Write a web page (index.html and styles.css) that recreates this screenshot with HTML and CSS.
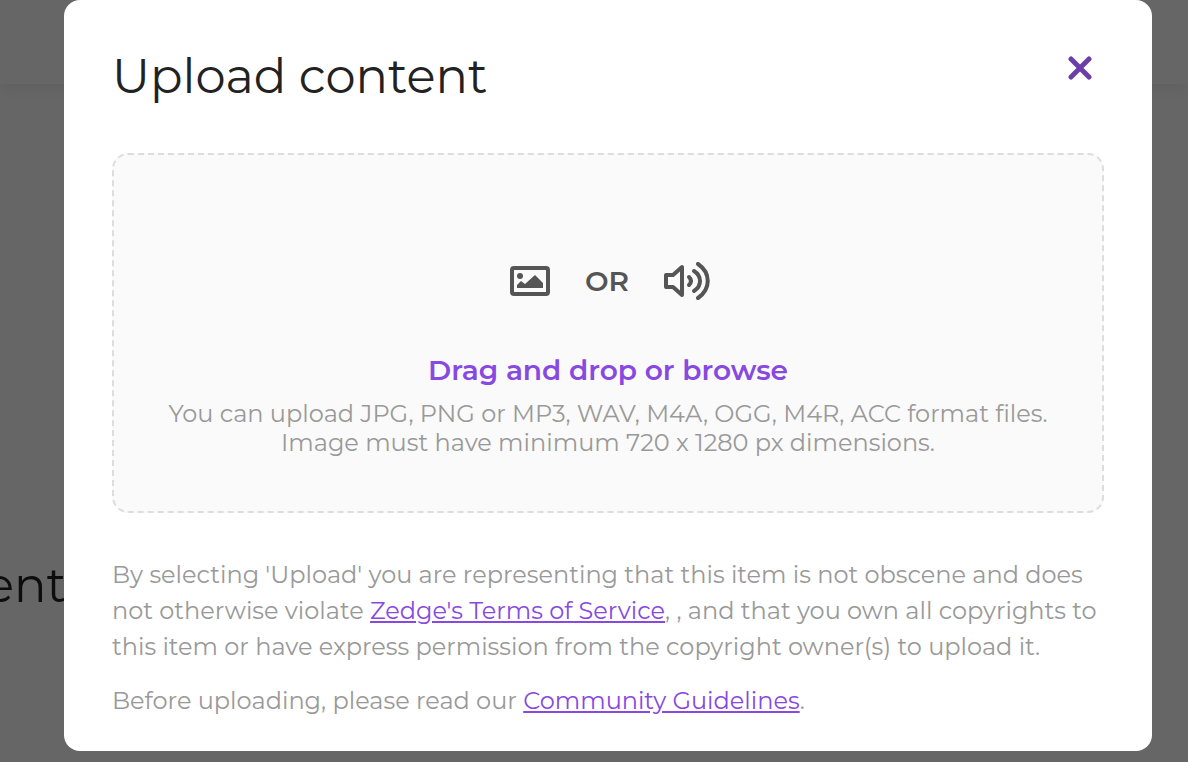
FILE: index.html
```html
<!DOCTYPE html>
<html lang="en">
<head>
  <meta charset="UTF-8" />
  <meta name="viewport" content="width=device-width, initial-scale=1.0" />
  <title>Upload content</title>
  <link rel="stylesheet" href="styles.css">
</head>
<body>
  <!-- Page behind the modal -->
  <div class="page" aria-hidden="true">
    <div class="page-header"></div>
    <div class="page-content">
      <p class="page-title">ent</p>
    </div>
  </div>

  <div class="overlay">
    <div class="modal" role="dialog" aria-labelledby="modalTitle">
      <div class="modal-header">
        <h1 id="modalTitle">Upload content</h1>
        <button type="button" class="close-button" aria-label="Close">
          <svg viewBox="0 0 24 24" width="24" height="24">
            <path d="M3 3L21 21M21 3L3 21" />
          </svg>
        </button>
      </div>

      <button type="button" class="dropzone">
        <span class="file-types">
          <svg viewBox="0 0 40 30" width="40" height="30">
            <rect class="line" x="2" y="2" width="36" height="26" rx="2" />
            <circle cx="10" cy="10" r="3" />
            <path d="M7 22V19L11 15L15 18L25 9L33 17V22Z" />
          </svg>
          <span class="or">OR</span>
          <svg viewBox="0 0 46 38" width="46" height="38">
            <path class="line" d="M2 13H9L18 5V33L9 25H2Z" />
            <path class="line" d="M25 15Q29 19 25 23" />
            <path class="line" d="M30 9C38 14 38 24 30 29" />
            <path class="line" d="M34 2C47 11 47 27 34 36" />
          </svg>
        </span>
        <span class="browse">Drag and drop or browse</span>
        <span class="hint">You can upload JPG, PNG or MP3, WAV, M4A, OGG, M4R, ACC format files.</span>
        <span class="hint">Image must have minimum 720 x 1280 px dimensions.</span>
      </button>

      <div class="terms">
        <p>By selecting 'Upload' you are representing that this item is not obscene and does
          not otherwise violate <a href="#terms">Zedge's Terms of Service</a>, , and that you own all copyrights to
          this item or have express permission from the copyright owner(s) to upload it.</p>
        <p>Before uploading, please read our <a href="#guidelines">Community Guidelines</a>.</p>
      </div>
    </div>
  </div>
</body>
</html>
```
FILE: styles.css
```css
* {
  box-sizing: border-box;
}
body {
  margin: 0;
  font-family: "Montserrat", "Inter", sans-serif;
  background-color: #fff;
  color: #222;
}

/* Page behind the modal */
.page {
  position: fixed;
  inset: 0;
  overflow: hidden;
}
.page-header {
  height: 84px;
  box-shadow: 0 4px 16px rgba(0, 0, 0, 0.08);
}
.page-content {
  display: flex;
  justify-content: flex-end;
  width: 66px;
  padding-top: 471px;
}
.page-title {
  margin: 0;
  font-size: 48px;
  line-height: 60px;
}

/* Modal */
.overlay {
  position: relative;
  min-height: 100vh;
  padding: 0 36px 11px 64px;
  background-color: rgba(0, 0, 0, 0.6);
}
.modal {
  padding: 44px 48px 32px;
  border-radius: 16px;
  background-color: #fff;
}
.modal-header {
  display: flex;
  justify-content: space-between;
  align-items: flex-start;
  margin-bottom: 45px;
}
.modal-header h1 {
  margin: 0;
  font-size: 48px;
  font-weight: 400;
  line-height: 64px;
}
.close-button {
  display: flex;
  padding: 12px;
  border: none;
  background: none;
  cursor: pointer;
}
.close-button svg {
  fill: none;
  stroke: #6c3fa8;
  stroke-width: 5;
  stroke-linecap: round;
}

/* Drop area */
.dropzone {
  display: flex;
  flex-direction: column;
  align-items: center;
  width: 100%;
  padding: 107px 16px 54px;
  border: 2px dashed #ddd;
  border-radius: 16px;
  background-color: #fafafa;
  font-family: inherit;
  cursor: pointer;
}
.file-types {
  display: flex;
  align-items: center;
  gap: 35px;
  margin-bottom: 52px;
  padding-left: 4px;
  color: #555;
}
.file-types svg {
  fill: currentColor;
}
.file-types .line {
  fill: none;
  stroke: currentColor;
  stroke-width: 4;
  stroke-linecap: round;
  stroke-linejoin: round;
}
.or {
  font-size: 28px;
  font-weight: 600;
}
.browse {
  margin-bottom: 11px;
  color: #8749e0;
  font-size: 28px;
  font-weight: 600;
  line-height: 36px;
}
.hint {
  color: #999;
  font-size: 24px;
  line-height: 29px;
}

/* Terms */
.terms {
  padding-top: 44px;
  color: #999;
  font-size: 24px;
  line-height: 36px;
}
.terms p {
  margin: 0 0 18px;
}
.terms p:last-child {
  margin-bottom: 0;
}
.terms a {
  color: #8749e0;
}
```
